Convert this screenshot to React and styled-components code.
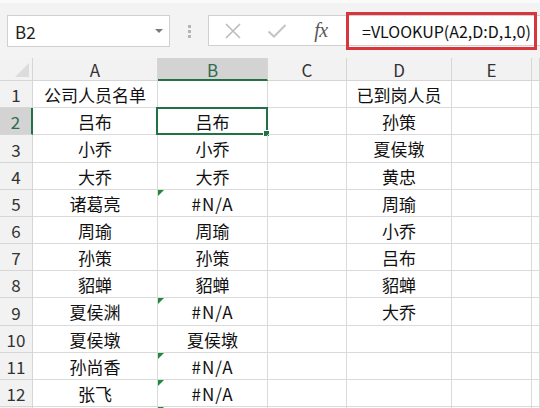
import React from "react";
import styled, { createGlobalStyle } from "styled-components";

const GlobalStyle = createGlobalStyle`
  html, body {
    margin: 0;
    padding: 0;
    background: #ffffff;
    overflow: hidden;
  }
  body {
    font-family: "Noto Sans CJK SC", "Noto Sans", sans-serif;
    color: #1a1a1a;
  }
`;

const Sheet = styled.div`
  width: 540px;
  height: 408px;
  overflow: hidden;
  display: flex;
  flex-direction: column;
`;

const Toolbar = styled.div`
  height: 58px;
  box-sizing: border-box;
  background: #f3f3f3;
  border-top: 3px solid #fafafa;
  display: flex;
  align-items: flex-start;
  padding: 12px 0 0 7px;
  flex-shrink: 0;
`;

const NameBox = styled.div`
  flex-shrink: 0;
  width: 163px;
  height: 32px;
  box-sizing: border-box;
  background: #fff;
  border: 1px solid #d0d0d0;
  display: flex;
  align-items: center;
  justify-content: space-between;
  padding: 0 6px 0 7px;
  font-size: 17px;
  color: #222;
`;

const Caret = styled.span`
  width: 0;
  height: 0;
  border-left: 4px solid transparent;
  border-right: 4px solid transparent;
  border-top: 4px solid #7a7a7a;
`;

const Grip = styled.div`
  flex-shrink: 0;
  width: 38px;
  height: 32px;
  display: flex;
  flex-direction: column;
  align-items: center;
  justify-content: center;
  gap: 2px;

  span {
    width: 3px;
    height: 3px;
    background: #b5b5b5;
  }
`;

const FormulaBox = styled.div`
  flex: 1;
  min-width: 0;
  height: 31px;
  box-sizing: border-box;
  background: #fff;
  border: 1px solid #d0d0d0;
  border-right: none;
  display: flex;
  align-items: center;
  padding-left: 2px;
`;

const IconSlot = styled.div`
  flex-shrink: 0;
  width: 44px;
  height: 100%;
  display: flex;
  align-items: center;
  justify-content: center;
  color: ${(p) => p.$color || "#bcbcbc"};
`;

const Fx = styled.span`
  font-family: "Liberation Serif", "DejaVu Serif", serif;
  font-style: italic;
  font-size: 20px;
  color: #595959;
  letter-spacing: -0.5px;
`;

const Highlight = styled.div`
  flex: 1;
  min-width: 0;
  margin: 0 3px 0 3px;
  height: 38px;
  box-sizing: border-box;
  border: 3px solid #d8363c;
  display: flex;
  align-items: center;
  padding-left: 13px;
  font-size: 16px;
  color: #111;
  white-space: nowrap;
`;

const Grid = styled.div`
  display: grid;
  grid-template-columns: 33px 125px 110px 79px 105px 80px 1fr;
  grid-template-rows: 23px 27px 27px 28px 27px 27px 27px 27px 27px 28px 27px 27px 27px 27px;
  background: #fff;
`;

const HeadCell = styled.div`
  box-sizing: border-box;
  background: ${(p) => (p.$active ? "#d3d3d3" : "#f2f2f2")};
  border-right: 1px solid ${(p) => (p.$active && p.$row ? "#217346" : "#d6d6d6")};
  border-right-width: ${(p) => (p.$active && p.$row ? "2px" : "1px")};
  border-bottom: ${(p) => (p.$active && !p.$row ? "2px solid #217346" : "1px solid #d6d6d6")};
  display: flex;
  align-items: center;
  justify-content: center;
  font-size: 17px;
  color: ${(p) => (p.$active ? "#2f6b4c" : "#333")};
  line-height: 1;
  padding-top: 1px;
`;

const Corner = styled(HeadCell)`
  position: relative;

  &::after {
    content: "";
    position: absolute;
    right: 3px;
    bottom: 3px;
    width: 0;
    height: 0;
    border-left: 14px solid transparent;
    border-bottom: 14px solid #dcdcdc;
  }
`;

const Cell = styled.div`
  position: relative;
  box-sizing: border-box;
  border-right: 1px solid #dadada;
  border-bottom: 1px solid #dadada;
  display: flex;
  align-items: center;
  justify-content: center;
  font-size: 17px;
  color: #111;
  white-space: nowrap;
  letter-spacing: ${(p) => (p.$latin ? "1px" : "0")};
`;

const ErrorFlag = styled.span`
  position: absolute;
  left: 0;
  top: 0;
  width: 0;
  height: 0;
  border-top: 6px solid #1f8a3b;
  border-right: 6px solid transparent;
`;

const Selection = styled.span`
  position: absolute;
  left: -2px;
  top: -1px;
  right: -1px;
  bottom: -1px;
  border: 2px solid #217346;
  pointer-events: none;

  &::after {
    content: "";
    position: absolute;
    right: -4px;
    bottom: -4px;
    width: 5px;
    height: 5px;
    background: #217346;
    border: 1px solid #fff;
  }
`;

const columns = ["A", "B", "C", "D", "E", ""];

// the last row only peeks in at the bottom edge: just its error flag shows
const rows = [
  { label: "1", cells: ["公司人员名单", "", "", "已到岗人员"] },
  { label: "2", cells: ["吕布", "吕布", "", "孙策"] },
  { label: "3", cells: ["小乔", "小乔", "", "夏侯墩"] },
  { label: "4", cells: ["大乔", "大乔", "", "黄忠"] },
  { label: "5", cells: ["诸葛亮", "#N/A", "", "周瑜"] },
  { label: "6", cells: ["周瑜", "周瑜", "", "小乔"] },
  { label: "7", cells: ["孙策", "孙策", "", "吕布"] },
  { label: "8", cells: ["貂蝉", "貂蝉", "", "貂蝉"] },
  { label: "9", cells: ["夏侯渊", "#N/A", "", "大乔"] },
  { label: "10", cells: ["夏侯墩", "夏侯墩", "", ""] },
  { label: "11", cells: ["孙尚香", "#N/A", "", ""] },
  { label: "12", cells: ["张飞", "#N/A", "", ""] },
  { label: "", cells: ["", "", "", ""], flag: true },
];

const CrossIcon = () => (
  <svg width="18" height="18" viewBox="0 0 18 18">
    <path d="M2 2 L16 16 M16 2 L2 16" stroke="currentColor" strokeWidth="1.6" fill="none" />
  </svg>
);

const CheckIcon = () => (
  <svg width="20" height="16" viewBox="0 0 20 16">
    <path d="M1.5 8.5 L7 13.5 L18.5 2" stroke="currentColor" strokeWidth="2" fill="none" />
  </svg>
);

export default function App() {
  return (
    <>
      <GlobalStyle />
      <Sheet>
        <Toolbar>
          <NameBox>
            B2
            <Caret />
          </NameBox>
          <Grip>
            <span />
            <span />
            <span />
          </Grip>
          <FormulaBox>
            <IconSlot>
              <CrossIcon />
            </IconSlot>
            <IconSlot $color="#c4c4c4">
              <CheckIcon />
            </IconSlot>
            <IconSlot>
              <Fx>fx</Fx>
            </IconSlot>
            <Highlight>=VLOOKUP(A2,D:D,1,0)</Highlight>
          </FormulaBox>
        </Toolbar>
        <Grid>
          <Corner />
          {columns.map((c) => (
            <HeadCell key={c || "f"} $active={c === "B"}>
              {c}
            </HeadCell>
          ))}
          {rows.map((r, i) => (
            <React.Fragment key={i}>
              <HeadCell $row $active={i === 1}>
                {r.label}
              </HeadCell>
              {r.cells.map((v, j) => (
                <Cell key={j} $latin={v.startsWith("#")}>
                  {j === 1 && (v === "#N/A" || r.flag) && <ErrorFlag />}
                  {j === 1 && i === 1 && <Selection />}
                  {v}
                </Cell>
              ))}
              <Cell />
              <Cell />
            </React.Fragment>
          ))}
        </Grid>
      </Sheet>
    </>
  );
}
